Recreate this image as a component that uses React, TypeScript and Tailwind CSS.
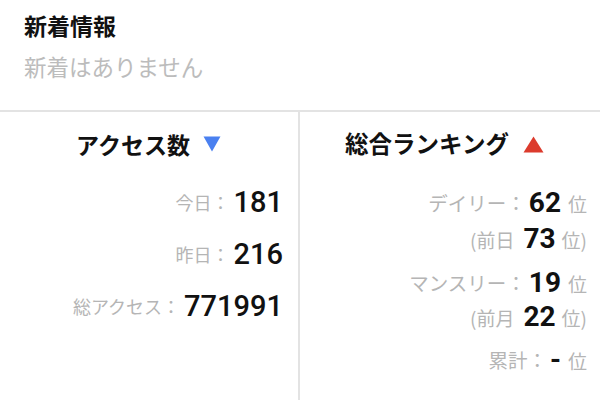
import React from "react";

const jp = { fontFamily: '"Noto Sans CJK JP", "Noto Sans", sans-serif' };
const num = { fontFamily: 'Roboto, "Liberation Sans", sans-serif' };

function AccessRow({ label, value }: { label: string; value: string }) {
  return (
    <div className="h-[52px] flex items-center justify-end">
      <span className="text-[18px] text-[#b5b5b5] leading-none" style={jp}>
        {label}：
      </span>
      <span className="text-[29px] font-medium text-[#111] leading-none ml-[4px]" style={num}>
        {value}
      </span>
    </div>
  );
}

function RankRow({ label, value, cls }: { label: string; value: string; cls: string }) {
  return (
    <div className={"h-[34px] flex items-center justify-end " + cls}>
      <span className="text-[19.5px] text-[#b5b5b5] leading-none" style={jp}>
        {label}：
      </span>
      <span className="text-[28px] font-bold text-[#111] leading-none ml-[3px]" style={num}>
        {value}
      </span>
      <span className="text-[19px] text-[#b5b5b5] leading-none ml-[7px]" style={jp}>
        位
      </span>
    </div>
  );
}

function PrevRow({ label, value, cls }: { label: string; value: string; cls: string }) {
  return (
    <div className={"h-[34px] flex items-center justify-end " + cls}>
      <span className="text-[19px] text-[#b5b5b5] leading-none" style={jp}>
        ({label}
      </span>
      <span className="text-[28px] font-bold text-[#111] leading-none ml-[9px]" style={num}>
        {value}
      </span>
      <span className="text-[19px] text-[#b5b5b5] leading-none ml-[6px]" style={jp}>
        位)
      </span>
    </div>
  );
}

export default function App() {
  return (
    <div className="w-[600px] h-[400px] bg-white overflow-hidden flex flex-col">
      <div className="h-[112px] pl-[24px] pt-[9px] border-b-2 border-[#e3e3e3]">
        <div className="text-[23px] font-bold text-[#111] leading-[32px]" style={jp}>
          新着情報
        </div>
        <div className="text-[22.5px] text-[#bcbcbc] leading-[32px] mt-[9px]" style={jp}>
          新着はありません
        </div>
      </div>
      <div className="flex flex-1">
        <div className="w-[300px] border-r-2 border-[#e3e3e3] pr-[15px]">
          <div className="h-[64px] flex items-center justify-center pl-[14px]">
            <span className="text-[23px] font-bold text-[#111] leading-none" style={jp}>
              アクセス数
            </span>
            <svg width="18" height="16" viewBox="0 0 18 16" className="ml-[13px]">
              <polygon points="0.5,0.5 17.5,0.5 9,15.5" fill="#4a80f0" />
            </svg>
          </div>
          <AccessRow label="今日" value="181" />
          <AccessRow label="昨日" value="216" />
          <AccessRow label="総アクセス" value="771991" />
        </div>
        <div className="flex-1 pr-[13px]">
          <div className="h-[64px] flex items-center justify-center pl-[2px]">
            <span className="text-[23.5px] font-bold text-[#111] leading-none" style={jp}>
              総合ランキング
            </span>
            <svg width="21" height="17" viewBox="0 0 21 17" className="ml-[14px]">
              <polygon points="10.5,0.5 20.5,16.5 0.5,16.5" fill="#dc3b2d" />
            </svg>
          </div>
          <RankRow label="デイリー" value="62" cls="mt-[10px]" />
          <PrevRow label="前日" value="73" cls="mt-[2px]" />
          <RankRow label="マンスリー" value="19" cls="mt-[10px]" />
          <PrevRow label="前月" value="22" cls="mt-0" />
          <RankRow label="累計" value="-" cls="mt-[9px]" />
        </div>
      </div>
    </div>
  );
}
